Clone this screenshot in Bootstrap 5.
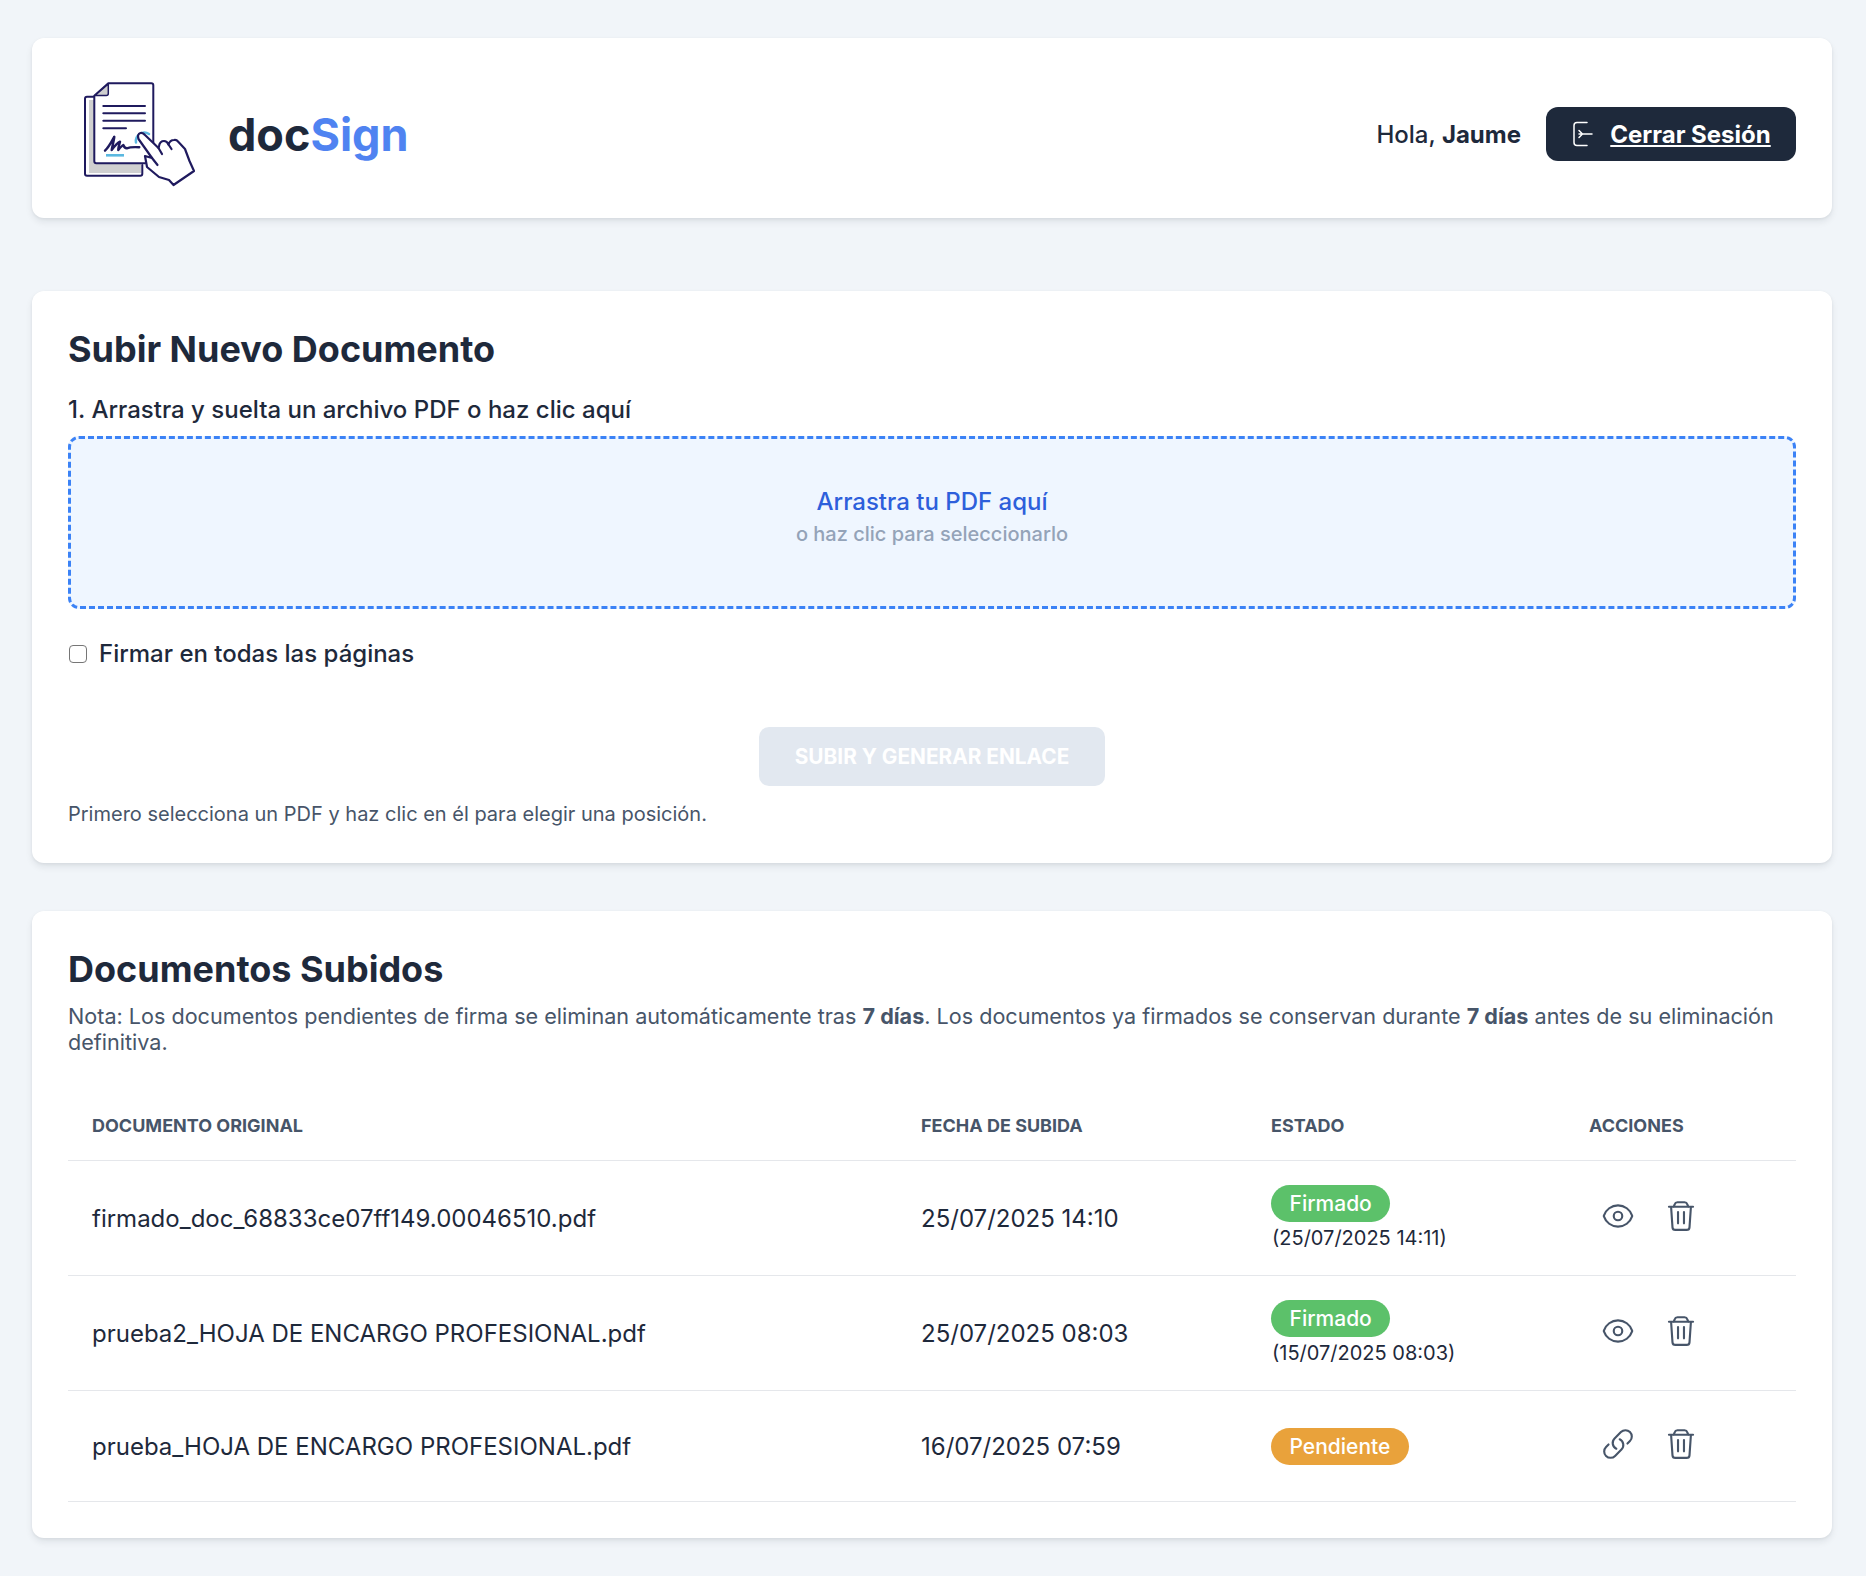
<!DOCTYPE html>
<html lang="es">
<head>
<meta charset="utf-8">
<title>docSign</title>
<link href="https://cdn.jsdelivr.net/npm/bootstrap@5.3.0/dist/css/bootstrap.min.css" rel="stylesheet">
<style>
html,body{height:100%}
body{background:#f1f5f9;font-family:Inter,"Liberation Sans",sans-serif;color:#1e293b;font-size:19px;line-height:25px}
.shell{padding:38px 34px 38px 32px}
.panel{background:#fff;border-radius:12px;box-shadow:0 4px 7px rgba(15,23,42,.08),0 1px 3px rgba(15,23,42,.06)}
.toppanel{height:180px;margin-bottom:73px;padding:12px 36px 0 51px}
.logoimg{width:112px;height:108px;margin-right:33px}
.brand{font-size:45px;font-weight:700;line-height:54px;color:#1e293b;margin-top:2px}
.brand span{color:#4f83f1}
.hello{font-size:24px;font-weight:500;margin-right:25px}
.hello b{font-weight:700}
.logout{height:54px;width:250px;border-radius:12px;background:#1e293b;color:#fff;font-size:24px;font-weight:700;text-decoration:underline;gap:13px}
.logout:hover{color:#fff}
.logout svg{width:26px;height:26px}
.formpanel{height:572px;padding:36px 36px 0;margin-bottom:48px}
.ttl{font-size:36px;font-weight:700;line-height:44px;margin:0;color:#1e293b}
.steplabel{font-size:24px;font-weight:500;line-height:30px;margin:24px 0 11px}
.dropz{height:173px;border:3px dashed #3b82f6;border-radius:11px;background:#eff6ff;padding-bottom:11px}
.dropmain{font-size:24px;font-weight:500;color:#2d5fdb;line-height:30px;margin-bottom:4px}
.dropsub{font-size:20px;font-weight:500;color:#94a3b8;line-height:26px}
.signchk{margin-top:30px;padding-left:1px;gap:12px;font-size:24px;font-weight:500;line-height:30px}
.signchk input{width:18px;height:18px;margin:0;border:1.5px solid #767676;border-radius:4px;appearance:none;background:#fff}
.sendbtn{width:346px;height:59px;background:#e2e8f0;border:0;border-radius:10px;color:#fff;font-size:20.800px;font-weight:700;margin:58px auto 15px;display:block}
.hintx{font-size:20px;color:#475569;line-height:26px;margin:0}
.listpanel{height:627px;padding:36px 36px 0}
.notex{font-size:21.600px;line-height:26px;color:#475569;margin:12px 0 0}
.notex b{font-weight:700}
.doctable{margin:29px 0 0;table-layout:fixed;width:100%;border-collapse:collapse}
.doctable th{font-size:18px;font-weight:700;color:#475569;padding:7px 24px 0;height:76px;border-bottom:1px solid #e5e7eb;vertical-align:middle;text-transform:uppercase}
.doctable td{padding:2px 24px 0;border-bottom:1px solid #e5e7eb;font-size:24px;vertical-align:middle;color:#1e293b}
.c1{width:829px}.c2{width:350px}.c3{width:318px}
.r1{height:115px}.r3{height:111px}
.pill{display:inline-block;height:37px;line-height:37px;border-radius:19px;padding:0 18.500px;color:#fff;font-size:21px;font-weight:500}
.okpill{background:#5cc16a}
.waitpill{background:#e9a23b}
.doctable td.statecell{padding-top:0}
.doctable td.waitcell{padding-top:2px}
.when{font-size:20px;line-height:24px;margin-top:4px;padding-left:1px}
.acts{gap:29px;padding-left:12px;margin-top:-4px}
.acts svg{width:34px;height:34px;display:block;color:#475569}
</style>
</head>
<body>
<div class="shell">
  <header class="panel toppanel d-flex align-items-center justify-content-between">
    <div class="d-flex align-items-center">
      <svg class="logoimg" viewBox="0 0 112 108" fill="none" stroke-linecap="round" stroke-linejoin="round">
        <path d="M6 20H12V84H58V93H6Z" fill="#d0d0d0"/>
        <path d="M10.500 16.700H4Q2 16.700 2 18.700V93.700Q2 95.700 4 95.700H57.300Q59.300 95.700 59.300 93.700V85" stroke="#1f1a5e" stroke-width="2"/>
        <path d="M25.300 3.300H68.300Q70.300 3.300 70.300 5.300V84H13.300Q11.300 84 11.300 82V15.700Z" fill="#fff"/>
        <path d="M62 83.300H13.300Q11.300 83.300 11.300 81.300V15.700L25.300 3.300H68.300Q70.300 3.300 70.300 5.300V70" stroke="#1f1a5e" stroke-width="2"/>
        <path d="M12 15.500H23.300Q25.300 15.500 25.300 13.500V4Z" fill="#cfcfcf" stroke="#1f1a5e" stroke-width="1.500"/>
        <path d="M20.300 26H62M20.300 33.300H62M20.300 40.700H62M20.300 48.300H43" stroke="#1f1a5e" stroke-width="2"/>
        <path d="M22 70.700C26 67 29.500 60 31.300 56.700C31 61 29 67 28.700 70C31 67 35 62.500 37 61.700C36.500 64 35 68 35.300 70C37 68 39 65.500 40.300 65C41 67 42 68.300 43.700 68.300C47 67 51 67 56.300 67.300" stroke="#1f1a5e" stroke-width="2.400"/>
        <path d="M23 75.300H41" stroke="#5bb8e0" stroke-width="2.600" stroke-linecap="butt"/>
        <path d="M53 62.500A8.500 8.500 0 0 1 66 54" stroke="#5bb8e0" stroke-width="2.500"/>
        <path d="M55.500 59Q54 54 57.500 53Q60 52.500 62 55L75.500 68L76 66Q77 61 81 61Q84 61 85.500 64.500Q87 60 91 60Q93.500 59.500 95 61.500L102 69L106.500 81L111 91L90.500 105L86 100L76 97L64 87L62 76L69 78Z" fill="#fff" stroke="#1f1a5e" stroke-width="2.200"/>
        <path d="M69 78L74.500 85M75.500 68L79 74M85.500 64.500L88.500 69" stroke="#1f1a5e" stroke-width="2.200"/>
      </svg>
      <span class="brand">doc<span>Sign</span></span>
    </div>
    <div class="d-flex align-items-center">
      <span class="hello">Hola, <b>Jaume</b></span>
      <a href="#" class="logout d-flex align-items-center justify-content-center">
        <svg viewBox="0 0 26 26" fill="none" stroke="#fff" stroke-width="1.500" stroke-linecap="round" stroke-linejoin="round"><path d="M16 1.500H6Q3 1.500 3 4.500V21.500Q3 24.500 6 24.500H16"/><path d="M8 13H21M8 9.500L11.500 13L8 16.500"/></svg>
        <span>Cerrar Sesión</span>
      </a>
    </div>
  </header>

  <section class="panel formpanel">
    <h2 class="ttl">Subir Nuevo Documento</h2>
    <div class="steplabel">1. Arrastra y suelta un archivo PDF o haz clic aquí</div>
    <div class="dropz d-flex flex-column align-items-center justify-content-center">
      <div class="dropmain">Arrastra tu PDF aquí</div>
      <div class="dropsub">o haz clic para seleccionarlo</div>
    </div>
    <label class="signchk d-flex align-items-center"><input type="checkbox"><span>Firmar en todas las páginas</span></label>
    <button type="button" class="sendbtn">SUBIR Y GENERAR ENLACE</button>
    <p class="hintx">Primero selecciona un PDF y haz clic en él para elegir una posición.</p>
  </section>

  <section class="panel listpanel">
    <h2 class="ttl">Documentos Subidos</h2>
    <p class="notex">Nota: Los documentos pendientes de firma se eliminan automáticamente tras <b>7 días</b>. Los documentos ya firmados se conservan durante <b>7 días</b> antes de su eliminación definitiva.</p>
    <table class="doctable">
      <colgroup><col class="c1"><col class="c2"><col class="c3"><col></colgroup>
      <thead><tr><th>Documento Original</th><th>Fecha de Subida</th><th>Estado</th><th>Acciones</th></tr></thead>
      <tbody>
        <tr class="r1"><td>firmado_doc_68833ce07ff149.00046510.pdf</td><td>25/07/2025 14:10</td>
          <td class="statecell"><span class="pill okpill">Firmado</span><div class="when">(25/07/2025 14:11)</div></td>
          <td class="statecell"><div class="acts d-flex align-items-center">
            <svg viewBox="0 0 24 24" fill="none" stroke="currentColor" stroke-width="1.500" stroke-linecap="round" stroke-linejoin="round"><path d="M2.036 12.322a1.012 1.012 0 010-.639C3.423 7.51 7.36 4.5 12 4.5c4.638 0 8.573 3.007 9.963 7.178.07.207.07.431 0 .639C20.577 16.49 16.64 19.5 12 19.5c-4.638 0-8.573-3.007-9.963-7.178z"/><path d="M15 12a3 3 0 11-6 0 3 3 0 016 0z"/></svg>
            <svg viewBox="0 0 24 24" fill="none" stroke="currentColor" stroke-width="1.500" stroke-linecap="round" stroke-linejoin="round"><path d="M3.500 5.500H20.500M5 5.500L6 20Q6.100 21.800 8 21.800H16Q17.900 21.800 18 20L19 5.500M6.800 5.500L7.600 3.600Q8 2.300 9.500 2.300H14.500Q16 2.300 16.400 3.600L17.200 5.500M9.900 9.200V17.200M14.100 9.200V17.200"/></svg>
          </div></td></tr>
        <tr class="r1"><td>prueba2_HOJA DE ENCARGO PROFESIONAL.pdf</td><td>25/07/2025 08:03</td>
          <td class="statecell"><span class="pill okpill">Firmado</span><div class="when">(15/07/2025 08:03)</div></td>
          <td class="statecell"><div class="acts d-flex align-items-center">
            <svg viewBox="0 0 24 24" fill="none" stroke="currentColor" stroke-width="1.500" stroke-linecap="round" stroke-linejoin="round"><path d="M2.036 12.322a1.012 1.012 0 010-.639C3.423 7.51 7.36 4.5 12 4.5c4.638 0 8.573 3.007 9.963 7.178.07.207.07.431 0 .639C20.577 16.49 16.64 19.5 12 19.5c-4.638 0-8.573-3.007-9.963-7.178z"/><path d="M15 12a3 3 0 11-6 0 3 3 0 016 0z"/></svg>
            <svg viewBox="0 0 24 24" fill="none" stroke="currentColor" stroke-width="1.500" stroke-linecap="round" stroke-linejoin="round"><path d="M3.500 5.500H20.500M5 5.500L6 20Q6.100 21.800 8 21.800H16Q17.900 21.800 18 20L19 5.500M6.800 5.500L7.600 3.600Q8 2.300 9.500 2.300H14.500Q16 2.300 16.400 3.600L17.200 5.500M9.900 9.200V17.200M14.100 9.200V17.200"/></svg>
          </div></td></tr>
        <tr class="r3"><td>prueba_HOJA DE ENCARGO PROFESIONAL.pdf</td><td>16/07/2025 07:59</td>
          <td class="statecell waitcell"><span class="pill waitpill">Pendiente</span></td>
          <td class="statecell"><div class="acts d-flex align-items-center">
            <svg viewBox="0 0 24 24" fill="none" stroke="currentColor" stroke-width="1.500" stroke-linecap="round" stroke-linejoin="round"><path d="M13.19 8.688a4.5 4.5 0 011.242 7.244l-4.5 4.5a4.5 4.5 0 01-6.364-6.364l1.757-1.757m13.35-.622l1.757-1.757a4.5 4.5 0 00-6.364-6.364l-4.5 4.5a4.5 4.5 0 001.242 7.244"/></svg>
            <svg viewBox="0 0 24 24" fill="none" stroke="currentColor" stroke-width="1.500" stroke-linecap="round" stroke-linejoin="round"><path d="M3.500 5.500H20.500M5 5.500L6 20Q6.100 21.800 8 21.800H16Q17.900 21.800 18 20L19 5.500M6.800 5.500L7.600 3.600Q8 2.300 9.500 2.300H14.500Q16 2.300 16.400 3.600L17.200 5.500M9.900 9.200V17.200M14.100 9.200V17.200"/></svg>
          </div></td></tr>
      </tbody>
    </table>
  </section>
</div>
<script src="https://cdn.jsdelivr.net/npm/bootstrap@5.3.0/dist/js/bootstrap.bundle.min.js"></script>
</body>
</html>
